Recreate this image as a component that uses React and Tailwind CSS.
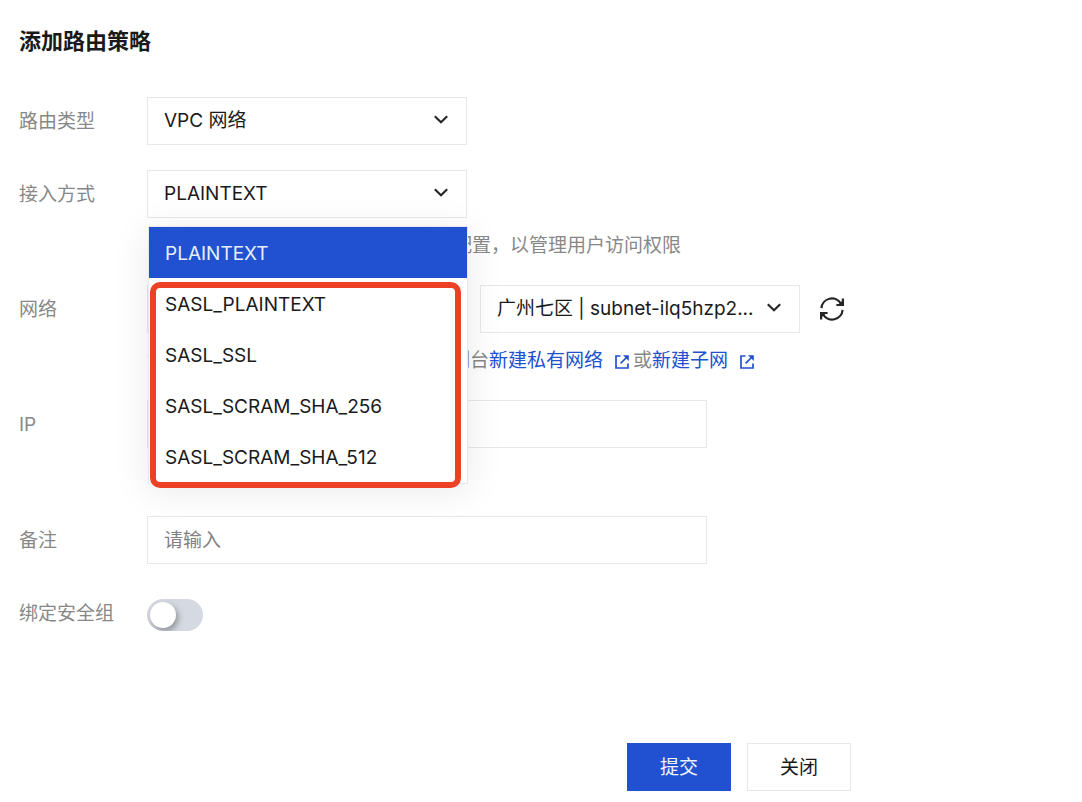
import { useState } from "react";

const accessModes = [
  "PLAINTEXT",
  "SASL_PLAINTEXT",
  "SASL_SSL",
  "SASL_SCRAM_SHA_256",
  "SASL_SCRAM_SHA_512",
];

function ChevronIcon() {
  return (
    <svg
      className="pointer-events-none absolute right-[19px] top-4 h-3 w-3.5"
      viewBox="0 0 14 12"
      fill="none"
      stroke="#262626"
      strokeWidth="2.1"
      aria-hidden="true"
    >
      <path d="M0.8 3.3 7 9.3 13.2 3.3" />
    </svg>
  );
}

function ExternalIcon() {
  return (
    <svg className="h-3.5 w-3.5" viewBox="0 0 14 14" fill="none" stroke="currentColor" strokeWidth="1.7" aria-hidden="true">
      <path d="M5.5 1H1v12h12V8.5" />
      <path d="M11.5 2.5 5.6 8.4" />
      <path d="M8 0.2h5.8V6z" fill="currentColor" stroke="none" />
    </svg>
  );
}

function RefreshIcon() {
  return (
    <svg className="h-6 w-6" viewBox="0 0 24 24" fill="none" stroke="#262626" strokeWidth="2.2" aria-hidden="true">
      <path d="M1.4 11.2A10.5 10.5 0 0 1 20.9 6.6" />
      <path d="M22.6 12.8A10.5 10.5 0 0 1 3.1 17.4" />
      <path d="M22.9 1.6V8H16.4" />
      <path d="M1.1 22.4V16H7.6" />
      <path d="M22.6 3.4v4.2H18.4z" fill="#262626" stroke="none" />
      <path d="M1.4 20.6v-4.2H5.6z" fill="#262626" stroke="none" />
    </svg>
  );
}

function Select({ id, label, options, ...rest }) {
  return (
    <div className="relative w-80 shrink-0">
      <select
        id={id}
        aria-label={label}
        className="h-12 w-full appearance-none border border-[#e7e8ee] bg-white pl-4 pr-10 text-[#1a1a1a] outline-none"
        {...rest}
      >
        {options.map((o) => (
          <option key={o}>{o}</option>
        ))}
      </select>
      <ChevronIcon />
    </div>
  );
}

function Row({ label, htmlFor, children }) {
  return (
    <div className="flex">
      <label htmlFor={htmlFor} className="w-32 shrink-0 leading-[49px] text-[#888888]">
        {label}
      </label>
      <div className="min-w-0 flex-1">{children}</div>
    </div>
  );
}

function Hint({ children }) {
  return <p className="mt-3.5 flex h-[29px] items-center whitespace-nowrap text-[#888888]">{children}</p>;
}

function HintLink({ children }) {
  return (
    <a href="#" className="flex items-center gap-3 pr-1 text-[#2151d1]">
      {children}
      <ExternalIcon />
    </a>
  );
}

const inputClass =
  "block h-12 w-full max-w-[560px] border border-[#e7e8ee] bg-white px-4 text-[#1a1a1a] outline-none placeholder:text-[#808080]";

export default function App() {
  const [mode, setMode] = useState(accessModes[0]);

  return (
    <main className="min-h-screen bg-white pb-3 pl-[19px] pr-5 font-['Inter','Noto_Sans_CJK_SC',sans-serif] text-[19px]">
      <form className="max-w-[832px]" onSubmit={(e) => e.preventDefault()}>
        <h1 className="pt-6 text-[22px] font-bold leading-[34px] text-[#1a1a1a]">添加路由策略</h1>

        <div className="mt-[39px] flex flex-col gap-6">
          <Row label="路由类型" htmlFor="route-type">
            <Select id="route-type" options={["VPC 网络"]} />
          </Row>

          <Row label="接入方式" htmlFor="access-mode">
            <div className="relative">
              <Select
                id="access-mode"
                options={accessModes}
                value={mode}
                onChange={(e) => setMode(e.target.value)}
              />
              <ul
                role="listbox"
                aria-label="接入方式"
                className="absolute left-px top-14 z-10 w-80 border border-[#e7e8ee] bg-white pb-px shadow-[0_6px_36px_rgba(0,0,0,0.09)]"
              >
                {accessModes.map((m) => (
                  <li
                    key={m}
                    role="option"
                    aria-selected={m === mode}
                    onClick={() => setMode(m)}
                    className={
                      m === mode
                        ? "h-[51px] cursor-pointer bg-[#2151d1] px-4 leading-[53px] text-[#e8edfa]"
                        : "h-[51px] cursor-pointer px-4 leading-[53px] text-[#1a1a1a]"
                    }
                  >
                    {m}
                  </li>
                ))}
              </ul>
              <div className="pointer-events-none absolute left-[3px] top-28 z-20 h-[206px] w-[311px] rounded-[10px] border-6 border-[#ed4126]" />
            </div>
            <Hint>选择该接入方式后，需为 SASL 用户配置，以管理用户访问权限</Hint>
          </Row>

          <Row label="网络" htmlFor="vpc">
            <div className="flex items-center">
              <Select id="vpc" options={["vpc-default"]} />
              <div className="ml-[13px]">
                <Select id="subnet" label="子网" options={["广州七区 | subnet-ilq5hzp2..."]} />
              </div>
              <button type="button" aria-label="刷新" className="ml-5">
                <RefreshIcon />
              </button>
            </div>
            <Hint>
              如果现有的网络不合适，您可以去控制台
              <HintLink>新建私有网络</HintLink>或<HintLink>新建子网</HintLink>
            </Hint>
          </Row>

          <div className="pb-[43px]">
            <Row label="IP" htmlFor="ip">
              <input id="ip" type="text" className={inputClass} />
            </Row>
          </div>

          <Row label="备注" htmlFor="remark">
            <input id="remark" type="text" placeholder="请输入" className={inputClass} />
          </Row>

          <Row label="绑定安全组" htmlFor="security-group">
            <div className="flex h-12 items-center pt-1">
              <input
                id="security-group"
                type="checkbox"
                role="switch"
                className="h-8 w-14 appearance-none overflow-hidden rounded-full bg-[#d5d9e1] p-[3px] before:block before:size-[26px] before:rounded-full before:bg-white before:shadow-[2px_3px_6px_rgba(0,0,0,0.35)] before:content-[''] checked:bg-[#2151d1] checked:before:ml-6"
              />
            </div>
          </Row>
        </div>

        <div className="mt-[105px] flex justify-end gap-4">
          <button type="submit" className="h-12 w-26 bg-[#2151d1] pt-0.5 text-[#f0f3fc]">
            提交
          </button>
          <button type="button" className="h-12 w-26 border border-[#e7e8ee] bg-white pt-0.5 text-[#1a1a1a]">
            关闭
          </button>
        </div>
      </form>
    </main>
  );
}
